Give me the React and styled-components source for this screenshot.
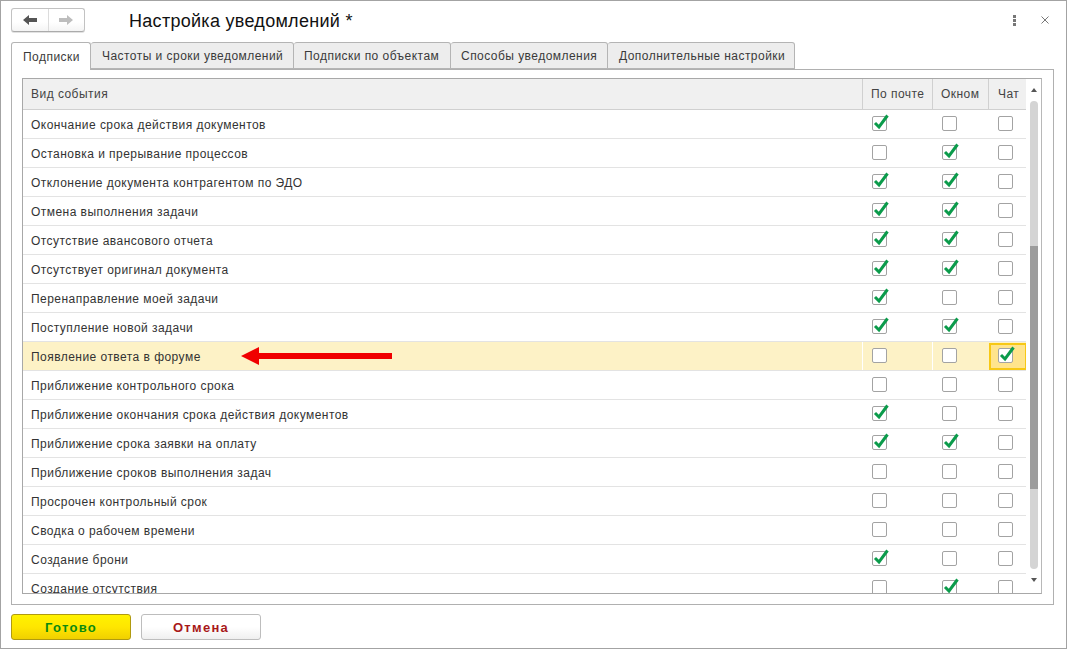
import React from "react";
import styled, { createGlobalStyle } from "styled-components";

const Global = createGlobalStyle`
  html, body { margin: 0; padding: 0; background: #fff; }
  * { box-sizing: border-box; }
  body { font-family: "Liberation Sans", Arial, sans-serif; color: #333; }
`;

const Win = styled.div`
  width: 1067px; height: 649px; border: 1px solid #a3a3a3; background: #fff;
  display: flex; flex-direction: column; padding: 7px 12px 8px 10px; overflow: hidden;
`;
const TitleBar = styled.div`
  display: flex; align-items: center; height: 24px; margin-bottom: 10px;
`;
const NavGroup = styled.div`
  display: flex; width: 74px; height: 24px; border: 1px solid #c2c2c2; border-bottom-color: #ababab;
  border-radius: 3px; background: linear-gradient(#fff 60%, #f4f4f4);
  box-shadow: 0 1px 0 #e2e2e2;
`;
const NavBtn = styled.div`
  flex: 1; display: flex; align-items: center; justify-content: center;
  & + & { border-left: 1px solid #dcdcdc; }
`;
const Title = styled.div`
  margin-left: 44px; padding-top: 2px; font-size: 18px; color: #111; flex: 1; letter-spacing: 0.29px;
`;
const WinActions = styled.div`
  display: flex; align-items: center; gap: 25px; margin-right: 5px;
`;
const Tabs = styled.div`
  display: flex; height: 27px; position: relative; z-index: 1;
`;
const Tab = styled.div`
  width: ${p => p.$w}px; height: ${p => p.$active ? 28 : 27}px; display: flex; align-items: center;
  padding-left: ${p => p.$pl}px; padding-top: 1px;
  font-size: 12px; letter-spacing: 0.46px; color: #3a3a3a;
  border: 1px solid #b4b4b4; border-left-width: ${p => p.$first ? 1 : 0}px;
  border-bottom: ${p => p.$active ? "none" : "1px solid #b4b4b4"};
  border-radius: 3px 3px 0 0;
  background: ${p => p.$active ? "#fff" : "#ededed"};
`;
const Panel = styled.div`
  width: 1043px; height: 537px; border: 1px solid #b0b0b0; padding: 8px 11px 10px 10px;
`;
const Table = styled.div`
  height: 516px; border: 1px solid #a8a8a8; border-right-color: #b8b8b8; display: flex; overflow: hidden;
`;
const Main = styled.div`
  width: 1004px; display: flex; flex-direction: column; overflow: hidden;
`;
const HeadRow = styled.div`
  display: grid; grid-template-columns: 839px 70px 56px 39px; height: 31px; flex: none;
  background: #f0f0f0; border-bottom: 1px solid #d0d0d0;
`;
const HeadCell = styled.div`
  display: flex; align-items: center; padding-left: ${p => p.$pl}px; padding-bottom: 1px; font-size: 12px;
  letter-spacing: 0.46px; color: #444;
  & + & { border-left: 1px solid #d0d0d0; }
`;
const Row = styled.div`
  display: grid; grid-template-columns: 839px 70px 56px 39px; height: 29px; flex: none;
  border-bottom: 1px solid #e3e3e3;
  background: ${p => p.$hl ? "#fdf2c6" : "#fff"};
`;
const NameCell = styled.div`
  display: flex; align-items: center; padding-left: 8px; padding-top: 1px; font-size: 12px;
  letter-spacing: 0.46px; color: #333; white-space: nowrap;
`;
const CheckCell = styled.div`
  display: flex; align-items: center; padding-left: 10px; padding-bottom: 1px;
  ${p => p.$hl ? "border-left: 1px solid #fff; padding-left: 9px;" : ""}
  ${p => p.$sel ? "background: #ffe48c; border: 2px solid #f7c815; margin: 1px 0 0 1px; padding-left: 7px; padding-bottom: 2px;" : ""}
`;
const Box = styled.div`
  width: 15px; height: 15px; border: 1px solid #a3a3a3; border-radius: 2px; background: #fff; position: relative; flex: none;
`;
const Tick = styled.svg`
  position: absolute; left: 1px; top: -3px; width: 15px; height: 15px; overflow: visible;
`;
const Scroll = styled.div`
  width: 15px; display: flex; flex-direction: column; align-items: center; background: #fff;
`;
const ArrowUp = styled.div`
  width: 0; height: 0; margin-top: 9px; border-left: 3.5px solid transparent; border-right: 3.5px solid transparent;
  border-bottom: 4px solid #555; flex: none;
`;
const ArrowDown = styled.div`
  width: 0; height: 0; margin-top: 9px; border-left: 3.5px solid transparent; border-right: 3.5px solid transparent;
  border-top: 4px solid #555; flex: none;
`;
const Track = styled.div`
  width: 8px; height: 468px; margin-top: 9px; border-radius: 4px; background: #d4d4d4; display: flex; flex-direction: column; flex: none;
`;
const Thumb = styled.div`
  width: 8px; height: 243px; margin-top: 145px; background: #9c9c9c; flex: none;
`;
const Footer = styled.div`
  display: flex; gap: 10px; margin-top: 9px;
`;
const Btn = styled.div`
  width: 120px; height: 26px; display: flex; align-items: center; justify-content: center;
  border-radius: 3px; font-size: 13px; font-weight: bold; letter-spacing: 1.3px;
  ${p => p.$primary
    ? "background: linear-gradient(#fff200 0%, #ffe600 50%, #f0d000 100%); border: 1px solid #b09a10; color: #0a8a10;"
    : "background: linear-gradient(#fff 50%, #efefef 100%); border: 1px solid #bdbdbd; color: #a81818;"}
`;
const RowArrow = styled.svg`
  position: absolute; left: 218px; top: 5px; width: 151px; height: 18px;
`;
const NameWrap = styled.div`
  position: relative; display: flex;
`;

const rows = [
  ["Окончание срока действия документов", 1, 0, 0],
  ["Остановка и прерывание процессов", 0, 1, 0],
  ["Отклонение документа контрагентом по ЭДО", 1, 1, 0],
  ["Отмена выполнения задачи", 1, 1, 0],
  ["Отсутствие авансового отчета", 1, 1, 0],
  ["Отсутствует оригинал документа", 1, 1, 0],
  ["Перенаправление моей задачи", 1, 0, 0],
  ["Поступление новой задачи", 1, 1, 0],
  ["Появление ответа в форуме", 0, 0, 1],
  ["Приближение контрольного срока", 0, 0, 0],
  ["Приближение окончания срока действия документов", 1, 0, 0],
  ["Приближение срока заявки на оплату", 1, 1, 0],
  ["Приближение сроков выполнения задач", 0, 0, 0],
  ["Просрочен контрольный срок", 0, 0, 0],
  ["Сводка о рабочем времени", 0, 0, 0],
  ["Создание брони", 1, 0, 0],
  ["Создание отсутствия", 0, 1, 0],
];
const tabs = [
  ["Подписки", 80, 11],
  ["Частоты и сроки уведомлений", 203, 11],
  ["Подписки по объектам", 157, 10],
  ["Способы уведомления", 157, 10],
  ["Дополнительные настройки", 187, 11],
];

const Check = ({ on }) => (
  <Box>
    {on ? (
      <Tick viewBox="0 0 15 15">
        <path d="M1 9 L5 13 L13.5 1.5" fill="none" stroke="#0b9b4b" strokeWidth="3" />
      </Tick>
    ) : null}
  </Box>
);

const NavArrow = ({ dir, color }) => (
  <svg width="14" height="10" viewBox="0 0 14 10">
    <path d={dir === "l" ? "M0 5 L6 0 V3 H14 V7 H6 V10 Z" : "M14 5 L8 0 V3 H0 V7 H8 V10 Z"} fill={color} />
  </svg>
);

export default function App() {
  return (
    <>
      <Global />
      <Win>
        <TitleBar>
          <NavGroup>
            <NavBtn><NavArrow dir="l" color="#555" /></NavBtn>
            <NavBtn><NavArrow dir="r" color="#bdbdbd" /></NavBtn>
          </NavGroup>
          <Title>Настройка уведомлений *</Title>
          <WinActions>
            <svg width="3" height="11" viewBox="0 0 3 11">
              <rect x="0" y="0" width="3" height="3" fill="#777" />
              <rect x="0" y="4" width="3" height="3" fill="#777" />
              <rect x="0" y="8" width="3" height="3" fill="#777" />
            </svg>
            <svg width="8" height="8" viewBox="0 0 8 8">
              <path d="M0.5 0.5 L7.5 7.5 M7.5 0.5 L0.5 7.5" stroke="#777" strokeWidth="1" fill="none" />
            </svg>
          </WinActions>
        </TitleBar>
        <Tabs>
          {tabs.map(([t, w, pl], i) => (
            <Tab key={t} $w={w} $pl={pl} $first={i === 0} $active={i === 0}>{t}</Tab>
          ))}
        </Tabs>
        <Panel>
          <Table>
            <Main>
              <HeadRow>
                <HeadCell $pl={8}>Вид события</HeadCell>
                <HeadCell $pl={8}>По почте</HeadCell>
                <HeadCell $pl={8}>Окном</HeadCell>
                <HeadCell $pl={9}>Чат</HeadCell>
              </HeadRow>
              {rows.map(([name, a, b, c], i) => {
                const hl = i === 8;
                return (
                  <Row key={name} $hl={hl}>
                    <NameWrap>
                      <NameCell>{name}</NameCell>
                      {hl ? (
                        <RowArrow viewBox="0 0 151 18">
                          <path d="M0 9 L18 0 V6 H151 V12 H18 V18 Z" fill="#f00000" />
                        </RowArrow>
                      ) : null}
                    </NameWrap>
                    <CheckCell $hl={hl}><Check on={a} /></CheckCell>
                    <CheckCell $hl={hl}><Check on={b} /></CheckCell>
                    <CheckCell $sel={hl}><Check on={c} /></CheckCell>
                  </Row>
                );
              })}
            </Main>
            <Scroll>
              <ArrowUp />
              <Track><Thumb /></Track>
              <ArrowDown />
            </Scroll>
          </Table>
        </Panel>
        <Footer>
          <Btn $primary>Готово</Btn>
          <Btn>Отмена</Btn>
        </Footer>
      </Win>
    </>
  );
}
